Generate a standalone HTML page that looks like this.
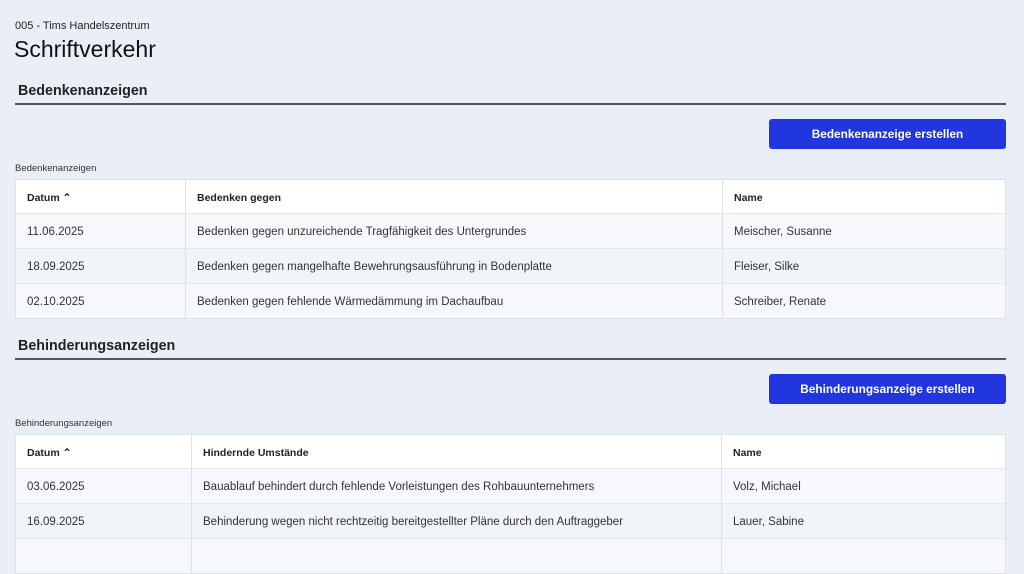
<!DOCTYPE html>
<html><head><meta charset="utf-8"><style>
*{margin:0;padding:0;box-sizing:border-box}
body{width:1024px;height:545px;overflow:hidden;background:#eaeef7;font-family:"Liberation Sans",sans-serif;color:#222;position:relative}
.a{position:absolute}
.crumb{left:15px;top:20px;font-size:11px;color:#222}
.title{left:14px;top:36px;font-size:23px;color:#111}
.h{left:18px;font-size:14.3px;font-weight:bold;color:#222}
.line{left:15px;width:991px;height:2px;background:#505664}
.btn{height:30px;background:#2236e0;color:#fff;font-size:11.8px;font-weight:bold;border-radius:3px;display:flex;align-items:center;justify-content:center}
.lbl{left:15px;font-size:9.5px;color:#333}
table{position:absolute;left:15px;width:991px;border-collapse:collapse;background:#fff;font-size:11.5px;border:1px solid #dde2ea}
td{height:35px;padding:2px 11px 0;border-right:1px solid #dde2ea;border-top:1px solid #e3e7ee;color:#333}
tr:first-child td{font-weight:bold;font-size:10.5px;height:34px;border-top:none;color:#222}
tr:nth-child(even) td{background:#f6f8fc}
tr:nth-child(odd):not(:first-child) td{background:#f1f4f9}
</style></head><body>
<div class="a crumb">005 - Tims Handelszentrum</div>
<div class="a title">Schriftverkehr</div>

<div class="a h" style="top:83px">Bedenkenanzeigen</div>
<div class="a line" style="top:103px"></div>
<div class="a btn" style="left:769px;top:119px;width:237px">Bedenkenanzeige erstellen</div>
<div class="a lbl" style="top:163px">Bedenkenanzeigen</div>
<table style="top:179px">
<tr><td style="width:170px">Datum ⌃</td><td style="width:537px">Bedenken gegen</td><td>Name</td></tr>
<tr><td>11.06.2025</td><td>Bedenken gegen unzureichende Tragfähigkeit des Untergrundes</td><td>Meischer, Susanne</td></tr>
<tr><td>18.09.2025</td><td>Bedenken gegen mangelhafte Bewehrungsausführung in Bodenplatte</td><td>Fleiser, Silke</td></tr>
<tr><td>02.10.2025</td><td>Bedenken gegen fehlende Wärmedämmung im Dachaufbau</td><td>Schreiber, Renate</td></tr>
</table>

<div class="a h" style="top:338px">Behinderungsanzeigen</div>
<div class="a line" style="top:358px"></div>
<div class="a btn" style="left:769px;top:374px;width:237px">Behinderungsanzeige erstellen</div>
<div class="a lbl" style="top:418px">Behinderungsanzeigen</div>
<table style="top:434px">
<tr><td style="width:176px">Datum ⌃</td><td style="width:530px">Hindernde Umstände</td><td>Name</td></tr>
<tr><td>03.06.2025</td><td>Bauablauf behindert durch fehlende Vorleistungen des Rohbauunternehmers</td><td>Volz, Michael</td></tr>
<tr><td>16.09.2025</td><td>Behinderung wegen nicht rechtzeitig bereitgestellter Pläne durch den Auftraggeber</td><td>Lauer, Sabine</td></tr>
<tr><td>&nbsp;</td><td></td><td></td></tr>
</table>
</body></html>
